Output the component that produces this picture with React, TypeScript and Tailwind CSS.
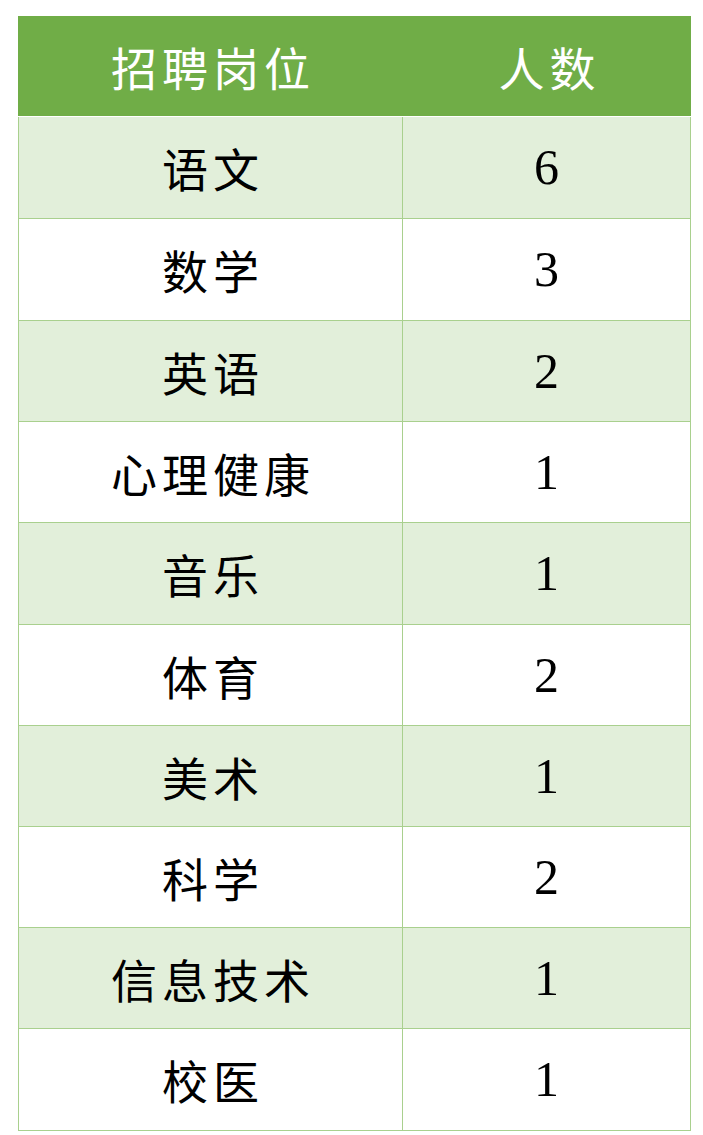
const rows: { name: string; count: string; h: string; shaded: boolean }[] = [
  { name: "语文", count: "6", h: "h-[102px]", shaded: true },
  { name: "数学", count: "3", h: "h-[102px]", shaded: false },
  { name: "英语", count: "2", h: "h-[101px]", shaded: true },
  { name: "心理健康", count: "1", h: "h-[101px]", shaded: false },
  { name: "音乐", count: "1", h: "h-[102px]", shaded: true },
  { name: "体育", count: "2", h: "h-[101px]", shaded: false },
  { name: "美术", count: "1", h: "h-[101px]", shaded: true },
  { name: "科学", count: "2", h: "h-[101px]", shaded: false },
  { name: "信息技术", count: "1", h: "h-[101px]", shaded: true },
  { name: "校医", count: "1", h: "h-[102px]", shaded: false },
]

const cjk = "font-['Noto_Sans_CJK_SC',sans-serif]"
const num = "font-['Liberation_Serif',serif]"

export default function App() {
  return (
    <div className="min-h-[1135px] bg-white pt-[16px] pl-[18px]">
      <div className="w-[673px]">
        {/* header */}
        <div className="flex h-[101px] border-b border-white bg-[#70ad47] text-white">
          <div className={`flex w-[385px] items-center justify-center pl-[5px] text-[46px] tracking-[5px] ${cjk}`}>
            招聘岗位
          </div>
          <div className={`flex flex-1 items-center justify-center pl-[5px] text-[46px] tracking-[5px] ${cjk}`}>
            人数
          </div>
        </div>

        {rows.map((r) => (
          <div
            key={r.name}
            className={`flex ${r.h} border-x border-b border-[#a9d08e] text-black ${r.shaded ? "bg-[#e2efda]" : "bg-white"}`}
          >
            <div className={`flex w-[384px] items-center justify-center border-r border-[#a9d08e] pl-[5px] text-[46px] tracking-[5px] ${cjk}`}>
              {r.name}
            </div>
            <div className={`flex flex-1 items-center justify-center text-[50px] ${num}`}>{r.count}</div>
          </div>
        ))}
      </div>
    </div>
  )
}
